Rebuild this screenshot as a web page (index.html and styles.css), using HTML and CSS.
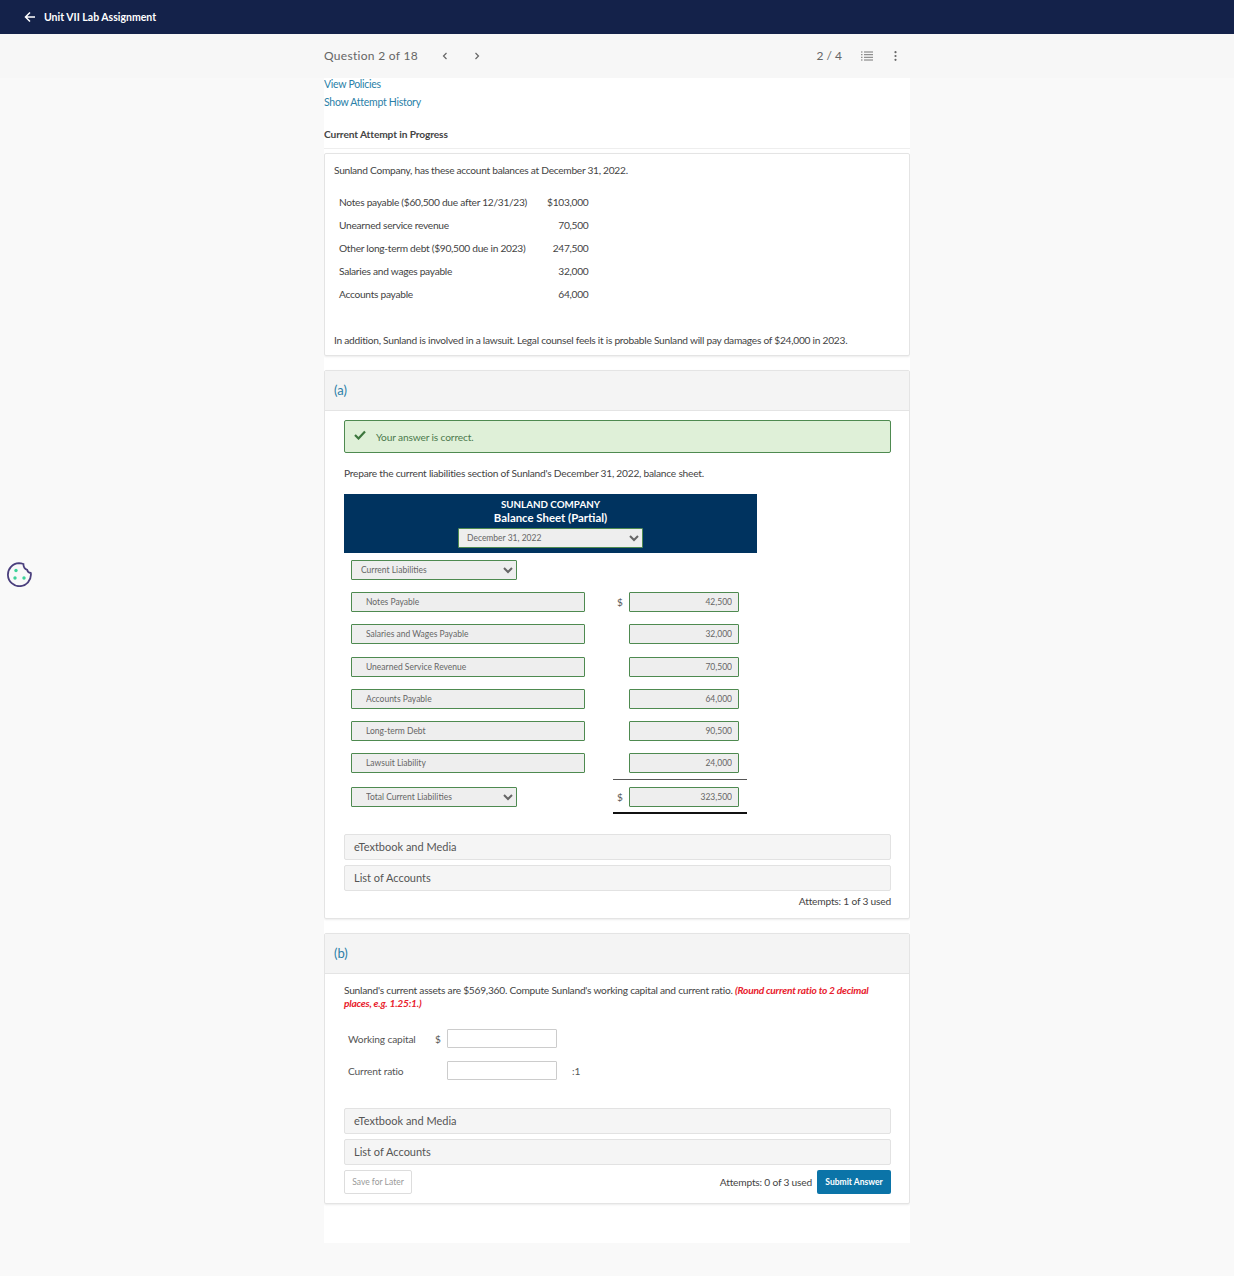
FILE: index.html
```html
<!DOCTYPE html>
<html lang="en">
<head>
    <meta charset="UTF-8">
    <title>Unit VII Lab Assignment</title>
    <link rel="stylesheet" href="styles.css">
</head>
<body>
    <header class="topbar">
        <svg class="back" width="12" height="12" viewBox="0 0 12 12"><path d="M11 6H2M6 1.5L1.5 6 6 10.5" fill="none" stroke="#fff" stroke-width="1.5"/></svg>
        <span>Unit VII Lab Assignment</span>
    </header>

    <div class="subbar">
        <div class="subbar-inner">
            <span class="q-count">Question 2 of 18</span>
            <svg class="nav-prev" width="6" height="8" viewBox="0 0 6 8"><path d="M4.5 1L1.5 4l3 3" fill="none" stroke="#666" stroke-width="1.2"/></svg>
            <svg class="nav-next" width="6" height="8" viewBox="0 0 6 8"><path d="M1.5 1l3 3-3 3" fill="none" stroke="#666" stroke-width="1.2"/></svg>
            <span class="q-part">2 / 4</span>
            <svg class="list-icon" width="12" height="10" viewBox="0 0 12 10"><path d="M0 1h1.5M3 1h9M0 3.7h1.5M3 3.7h9M0 6.3h1.5M3 6.3h9M0 9h1.5M3 9h9" stroke="#777" stroke-width="1"/></svg>
            <svg class="more-icon" width="3" height="10" viewBox="0 0 3 10"><circle cx="1.5" cy="1.2" r="1.1" fill="#666"/><circle cx="1.5" cy="5" r="1.1" fill="#666"/><circle cx="1.5" cy="8.8" r="1.1" fill="#666"/></svg>
        </div>
    </div>

    <main class="content">
        <a class="link">View Policies</a>
        <a class="link">Show Attempt History</a>
        <h2 class="attempt-title">Current Attempt in Progress</h2>

        <section class="card intro">
            <p class="intro-lead">Sunland Company, has these account balances at December 31, 2022.</p>
            <table class="balances">
                <tr><td>Notes payable ($60,500 due after 12/31/23)</td><td>$103,000</td></tr>
                <tr><td>Unearned service revenue</td><td>70,500</td></tr>
                <tr><td>Other long-term debt ($90,500 due in 2023)</td><td>247,500</td></tr>
                <tr><td>Salaries and wages payable</td><td>32,000</td></tr>
                <tr><td>Accounts payable</td><td>64,000</td></tr>
            </table>
            <p class="intro-end">In addition, Sunland is involved in a lawsuit. Legal counsel feels it is probable Sunland will pay damages of $24,000 in 2023.</p>
        </section>

        <section class="card part part-a">
            <div class="part-head">(a)</div>
            <div class="part-body">
                <div class="alert">
                    <svg width="12" height="10" viewBox="0 0 12 10"><path d="M1 5l3.5 3.5L11 1.5" fill="none" stroke="#3c763d" stroke-width="2.2"/></svg>
                    <span>Your answer is correct.</span>
                </div>
                <p class="prompt">Prepare the current liabilities section of Sunland's December 31, 2022, balance sheet.</p>

                <div class="sheet">
                    <div class="sheet-head">
                        <div class="company">SUNLAND COMPANY</div>
                        <div class="statement">Balance Sheet (Partial)</div>
                        <select class="field date-select" disabled><option>December 31, 2022</option></select>
                    </div>
                    <select class="field head-select" disabled><option>Current Liabilities</option></select>
                    <div class="sheet-row">
                        <input class="field name" value="Notes Payable" readonly>
                        <span class="dollar">$</span>
                        <input class="field amount" value="42,500" readonly>
                    </div>
                    <div class="sheet-row">
                        <input class="field name" value="Salaries and Wages Payable" readonly>
                        <span class="dollar"></span>
                        <input class="field amount" value="32,000" readonly>
                    </div>
                    <div class="sheet-row">
                        <input class="field name" value="Unearned Service Revenue" readonly>
                        <span class="dollar"></span>
                        <input class="field amount" value="70,500" readonly>
                    </div>
                    <div class="sheet-row">
                        <input class="field name" value="Accounts Payable" readonly>
                        <span class="dollar"></span>
                        <input class="field amount" value="64,000" readonly>
                    </div>
                    <div class="sheet-row">
                        <input class="field name" value="Long-term Debt" readonly>
                        <span class="dollar"></span>
                        <input class="field amount" value="90,500" readonly>
                    </div>
                    <div class="sheet-row">
                        <input class="field name" value="Lawsuit Liability" readonly>
                        <span class="dollar"></span>
                        <input class="field amount" value="24,000" readonly>
                    </div>
                    <div class="sheet-row total-row">
                        <select class="field total-select" disabled><option>Total Current Liabilities</option></select>
                        <span class="dollar">$</span>
                        <input class="field amount" value="323,500" readonly>
                    </div>
                </div>

                <div class="accordion after-sheet">eTextbook and Media</div>
                <div class="accordion">List of Accounts</div>
                <div class="attempts">Attempts: 1 of 3 used</div>
            </div>
        </section>

        <section class="card part part-b">
            <div class="part-head">(b)</div>
            <div class="part-body">
                <p class="prompt-b">Sunland's current assets are $569,360. Compute Sunland's working capital and current ratio. <em>(Round current ratio to 2 decimal places, e.g. 1.25:1.)</em></p>
                <div class="answer-row">
                    <label>Working capital</label>
                    <span class="answer-dollar">$</span>
                    <input class="answer">
                </div>
                <div class="answer-row">
                    <label>Current ratio</label>
                    <span class="answer-dollar"></span>
                    <input class="answer">
                    <span class="ratio">:1</span>
                </div>
                <div class="accordion after-answers">eTextbook and Media</div>
                <div class="accordion">List of Accounts</div>
                <div class="actions">
                    <button class="save">Save for Later</button>
                    <span class="attempts-inline">Attempts: 0 of 3 used</span>
                    <button class="submit">Submit Answer</button>
                </div>
            </div>
        </section>
    </main>

    <svg class="cookie" width="26" height="26" viewBox="0 0 26 26">
        <path d="M13 2.2c1.600 0 3 .3 4.400.8 0 3 1.500 5 3.800 5.800.3 1.800 1.800 3 3.600 3.200.1.300.1.700.1 1A11.500 11.500 0 1 1 13 2.200z" fill="none" stroke="#4a3f7d" stroke-width="1.800"/>
        <circle cx="10" cy="9.500" r="1.700" fill="#3dd39a"/>
        <circle cx="9" cy="17" r="1.700" fill="#3dd39a"/>
        <circle cx="18" cy="17" r="1.700" fill="#3dd39a"/>
    </svg>
</body>
</html>
```

FILE: styles.css
```css
* {
    box-sizing: border-box;
}

body {
    margin: 0;
    height: 1276px;
    background-color: #f9f9f9;
    font-family: Lato, "Open Sans", sans-serif;
    font-size: 10.2px;
    letter-spacing: -0.28px;
    color: #555;
    position: relative;
}

p {
    margin: 0;
}

.topbar {
    height: 34px;
    background-color: #14224a;
    color: #fff;
    display: flex;
    align-items: center;
    padding-left: 24px;
    font-size: 10.5px;
    font-weight: 700;
    letter-spacing: 0;
}

.topbar .back {
    margin-right: 8px;
}

.subbar {
    height: 44px;
    background-color: #f7f7f7;
}

.subbar-inner {
    width: 586px;
    height: 100%;
    margin-left: 324px;
    display: flex;
    align-items: center;
    color: #666;
}

.q-count {
    font-size: 12px;
    letter-spacing: 0.3px;
    width: 118px;
    margin-bottom: 2px;
}

.nav-prev {
    margin-right: 26px;
}

.q-part {
    margin-left: auto;
    font-size: 12px;
    margin-bottom: 2px;
    letter-spacing: 0;
}

.list-icon {
    margin-left: 19px;
}

.more-icon {
    margin-left: 21px;
    margin-right: 13px;
}

.content {
    width: 586px;
    height: 1165px;
    margin-left: 324px;
    background-color: #fff;
    overflow: hidden;
}

.link {
    display: block;
    height: 18px;
    line-height: 13px;
    font-size: 10.5px;
    letter-spacing: -0.28px;
    color: #2b7fa8;
}

.attempt-title {
    margin: 13px 0 0;
    height: 22px;
    font-size: 10.2px;
    line-height: 14px;
    font-weight: 700;
    letter-spacing: -0.12px;
    color: #444;
    border-bottom: 1px solid #eee;
}

.card {
    border: 1px solid #e4e4e4;
    border-radius: 2px;
    box-shadow: 0 1px 2px rgba(0, 0, 0, 0.08);
    background-color: #fff;
}

.intro {
    margin-top: 4px;
    height: 203px;
    padding: 9px 9px 0;
    color: #444;
}

.intro-lead {
    line-height: 14px;
}

.balances {
    border-collapse: collapse;
    margin: 13px 0 0 5px;
}

.balances td {
    height: 23.2px;
    padding: 0;
}

.balances td:last-child {
    text-align: right;
    padding-left: 20px;
}

.intro-end {
    margin-top: 27px;
    line-height: 14px;
    letter-spacing: -0.26px;
}

.part {
    margin-top: 14px;
}

.part-a {
    height: 549px;
}

.part-b {
    height: 271px;
}

.part-head {
    height: 40px;
    line-height: 38px;
    padding-left: 9px;
    background-color: #f4f4f4;
    border-bottom: 1px solid #e4e4e4;
    color: #2b7fa8;
    font-size: 13px;
    letter-spacing: 0;
}

.part-body {
    padding: 9px 18px 0 19px;
}

.alert {
    height: 33px;
    display: flex;
    align-items: center;
    background-color: #dff0d8;
    border: 1px solid #4e8a50;
    border-radius: 2px;
    padding-left: 9px;
    color: #4c7a4d;
    letter-spacing: -0.15px;
    margin-bottom: 13px;
}

.alert svg {
    margin-top: -3px;
}

.alert span {
    margin-left: 10px;
}

.prompt {
    line-height: 14px;
    letter-spacing: -0.23px;
    color: #444;
}

.sheet {
    width: 413px;
    margin-top: 14px;
}

.sheet-head {
    height: 59px;
    background-color: #00335f;
    color: #fff;
    font-weight: 700;
    text-align: center;
    line-height: 13px;
    padding-top: 4px;
    letter-spacing: 0;
}

.company {
    font-size: 9.8px;
}

.statement {
    font-size: 11.4px;
}

.field {
    height: 20px;
    background-color: #eee;
    border: 1px solid #4e8a50;
    border-radius: 1px;
    font-family: Lato, sans-serif;
    font-size: 8.5px;
    letter-spacing: 0;
    color: #666;
    opacity: 1;
}

.date-select {
    display: block;
    width: 185px;
    margin: 4px auto 0;
    padding-left: 4px;
}

.head-select {
    display: block;
    width: 166px;
    margin: 7px 0 12px 7px;
    padding-left: 5px;
}

.sheet-row {
    display: flex;
    align-items: center;
    height: 20px;
    margin: 0 0 12.3px 7px;
}

.name {
    width: 234px;
    padding-left: 14px;
}

.dollar {
    width: 44px;
    padding-left: 32px;
    font-size: 10px;
    letter-spacing: 0;
}

.amount {
    width: 110px;
    text-align: right;
    padding-right: 6px;
}

.total-select {
    width: 166px;
    margin-right: 68px;
    padding-left: 10px;
}

.total-row {
    position: relative;
    margin-top: 14px;
    margin-bottom: 0;
}

.total-row::before,
.total-row::after {
    content: "";
    position: absolute;
    left: 262px;
    width: 134px;
}

.total-row::before {
    top: -8px;
    border-top: 1px solid #555;
}

.total-row::after {
    bottom: -7px;
    border-top: 2px solid #111;
}

.accordion {
    height: 26px;
    line-height: 24px;
    margin-top: 5px;
    padding-left: 9px;
    background-color: #f5f5f5;
    border: 1px solid #e2e2e2;
    border-radius: 2px;
    font-size: 11px;
    letter-spacing: 0;
    color: #555;
}

.after-sheet {
    margin-top: 27px;
}

.after-answers {
    margin-top: 28px;
}

.attempts {
    text-align: right;
    margin-top: 3px;
    line-height: 14px;
    letter-spacing: -0.2px;
    color: #444;
}

.prompt-b {
    line-height: 13px;
    letter-spacing: -0.24px;
    color: #444;
    margin-top: 1px;
}

.prompt-b em {
    color: #e8202c;
    font-weight: 700;
}

.answer-row {
    display: flex;
    align-items: center;
    height: 19px;
    margin: 13px 0 0 4px;
    letter-spacing: -0.15px;
}

.prompt-b + .answer-row {
    margin-top: 19px;
}

.answer-row label {
    width: 87px;
}

.answer-dollar {
    width: 12px;
    font-size: 10px;
    letter-spacing: 0;
}

.answer {
    width: 110px;
    height: 19px;
    background-color: #fff;
    border: 1px solid #ccc;
    border-radius: 1px;
}

.ratio {
    margin-left: 15px;
}

.actions {
    display: flex;
    align-items: center;
    margin-top: 5px;
}

.save {
    width: 68px;
    height: 24px;
    padding: 0;
    background-color: #fff;
    border: 1px solid #ddd;
    border-radius: 2px;
    font-family: Lato, sans-serif;
    font-size: 8.5px;
    color: #999;
}

.attempts-inline {
    margin-left: auto;
    letter-spacing: -0.2px;
    color: #444;
}

.submit {
    width: 74px;
    height: 24px;
    margin-left: 5px;
    padding: 0;
    background-color: #0b74a8;
    border: 0;
    border-radius: 2px;
    font-family: Lato, sans-serif;
    font-size: 8.5px;
    font-weight: 700;
    color: #fff;
}

.cookie {
    position: absolute;
    left: 6px;
    top: 561px;
}
```
